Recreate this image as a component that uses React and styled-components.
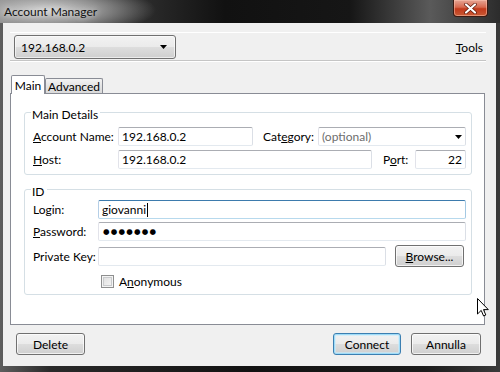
import React from "react";
import styled, { createGlobalStyle } from "styled-components";

const GlobalStyle = createGlobalStyle`
  html, body { margin: 0; padding: 0; background: #1b1b1b; }
  body { font-family: Lato, "Segoe UI", sans-serif; font-size: 12px; color: #000; }
  * { box-sizing: border-box; }
`;

const Window = styled.div`
  position: relative;
  width: 500px;
  height: 372px;
  display: flex;
  flex-direction: column;
  padding: 0 4px 6px 3px;
  background: linear-gradient(90deg, #5e5e5e 0%, #2a2a2a 10%, #121212 50%, #1c1c1c 85%, #3a3a3a 100%);
  overflow: hidden;
`;

const TitleBar = styled.div`
  height: 23px;
  margin: 0 -4px 0 -3px;
  padding: 0 12px 0 4px;
  display: flex;
  align-items: flex-start;
  justify-content: space-between;
  background:
    radial-gradient(ellipse 110px 26px at 46px 10px, rgba(215, 215, 215, 0.95) 0%, rgba(170, 170, 170, 0.75) 50%, rgba(90, 90, 90, 0) 100%),
    linear-gradient(90deg, #7a7a7a 0%, #3a3a3a 20%, #111 45%, #161616 70%, #5a5a5a 86%, #2c2c2c 100%);
`;

const Title = styled.span`
  line-height: 23px;
  font-size: 12px;
  color: #111;
  text-shadow: 0 0 6px rgba(255, 255, 255, 0.9);
`;

const CloseButton = styled.div`
  width: 35px;
  height: 17px;
  display: flex;
  align-items: center;
  justify-content: center;
  border: 1px solid #3b1a12;
  border-top: none;
  border-radius: 0 0 4px 4px;
  background: linear-gradient(#e6a595 0%, #d7694f 45%, #c2391b 55%, #c85a35 100%);
  box-shadow: inset 0 0 0 1px rgba(255, 200, 180, 0.5);
`;

const Client = styled.div`
  flex: 1;
  display: flex;
  flex-direction: column;
  background: #f0f0f0;
`;

const Toolbar = styled.div`
  margin: 9px 10px 0 7px;
  padding: 2px 3px 1px 4px;
  display: flex;
  align-items: center;
  justify-content: space-between;
  border-top: 1px solid #fff;
  border-bottom: 1px solid #c5c5c5;
  box-shadow: 0 1px 0 #fff;
`;

const DropButton = styled.div`
  width: ${(p) => p.width}px;
  height: 24px;
  padding: 0 8px 0 6px;
  display: flex;
  align-items: center;
  justify-content: space-between;
  border: 1px solid #707070;
  border-radius: 3px;
  background: linear-gradient(#f2f2f2 0%, #ebebeb 48%, #dddddd 52%, #cfcfcf 100%);
  box-shadow: inset 0 0 0 1px rgba(255, 255, 255, 0.6);
`;

const MenuText = styled.span`
  font-size: 12px;
`;

const Key = styled.u`
  text-decoration: underline;
  text-underline-offset: 1px;
`;

const TabStrip = styled.div`
  height: 18px;
  margin: 14px 11px 0 7px;
  display: flex;
  align-items: flex-end;
`;

const Tab = styled.div`
  width: ${(p) => p.width}px;
  height: ${(p) => (p.active ? 19 : 15)}px;
  margin-left: ${(p) => p.offset || 0}px;
  margin-bottom: ${(p) => (p.active ? -1 : 0)}px;
  position: relative;
  z-index: ${(p) => (p.active ? 1 : 0)};
  display: flex;
  align-items: center;
  justify-content: center;
  padding-top: ${(p) => (p.active ? 0 : 1)}px;
  border: 1px solid #898c95;
  border-bottom: none;
  border-radius: 2px 2px 0 0;
  background: ${(p) => (p.active ? "#fff" : "linear-gradient(#f3f3f3, #e4e4e4 50%, #dadada 100%)")};
  font-size: 12px;
`;

const Panel = styled.div`
  height: 232px;
  margin: 0 11px 0 7px;
  padding-top: 9px;
  border: 1px solid #898c95;
  background: #fff;
`;

const Group = styled.fieldset`
  margin: ${(p) => p.top || 0}px 12px 0 13px;
  padding: ${(p) => p.padTop}px 5px ${(p) => p.padBottom}px 8px;
  border: 1px solid #d5dfe5;
  border-radius: 3px;
  min-width: 0;
`;

const Legend = styled.legend`
  margin-left: -2px;
  padding: 6px 2px 0 1px;
  line-height: 12px;
  font-size: 12px;
`;

const Row = styled.div`
  display: flex;
  align-items: center;
  height: ${(p) => p.height || 19}px;
  margin-top: ${(p) => p.gap || 0}px;
`;

const Label = styled.span`
  width: ${(p) => p.width}px;
  margin-left: ${(p) => p.gap || 0}px;
  flex: none;
  font-size: 12px;
  white-space: nowrap;
`;

const TextBox = styled.div`
  height: 19px;
  width: ${(p) => (p.width ? `${p.width}px` : "auto")};
  flex: ${(p) => (p.width ? "none" : "1")};
  display: flex;
  align-items: center;
  justify-content: ${(p) => (p.right ? "flex-end" : "space-between")};
  padding: 0 3px;
  border: 1px solid;
  border-color: ${(p) =>
    p.focused ? "#3d7bad #a4c9e3 #b7d9ed #b5cfe7" : "#abadb3 #dbdfe6 #e3e9ef #e2e3ea"};
  border-radius: 2px;
  background: #fff;
  font-size: 12px;
  color: ${(p) => (p.muted ? "#6d6d6d" : "#000")};
  white-space: nowrap;
`;

const Caret = styled.span`
  display: inline-block;
  width: 1px;
  height: 14px;
  margin-left: 1px;
  background: #000;
  vertical-align: middle;
`;

const Dots = styled.span`
  font-family: "DejaVu Sans", sans-serif;
  font-size: 7.5px;
  letter-spacing: 1.2px;
  padding-left: 1px;
`;

const Button = styled.div`
  width: ${(p) => p.width}px;
  height: 22px;
  margin-left: ${(p) => p.gap || 0}px;
  margin-right: ${(p) => p.after || 0}px;
  flex: none;
  display: flex;
  align-items: center;
  justify-content: center;
  border: 1px solid ${(p) => (p.primary ? "#3c7fb1" : "#707070")};
  border-radius: 3px;
  background: linear-gradient(#f2f2f2 0%, #ebebeb 48%, #dddddd 52%, #cfcfcf 100%);
  box-shadow: ${(p) =>
    p.primary
      ? "inset 0 0 0 1px #9fdcf8, inset 0 0 0 2px rgba(200, 235, 252, 0.6)"
      : "inset 0 0 0 1px rgba(255, 255, 255, 0.7)"};
  font-size: 12px;
`;

const CheckRow = styled.div`
  display: flex;
  align-items: center;
  height: 20px;
  margin: 4px 0 0 68px;
`;

const CheckBox = styled.span`
  width: 13px;
  height: 13px;
  margin-right: 5px;
  border: 1px solid #8e8f8f;
  background: linear-gradient(135deg, #dcdcdc 0%, #f7f7f7 100%);
  box-shadow: inset 0 0 0 1px #f4f4f4, inset 0 0 0 2px #c9cbcd;
`;

const Footer = styled.div`
  display: flex;
  align-items: center;
  padding: 8px 15px 10px 13px;
`;

const Spacer = styled.div`
  flex: 1;
`;

const Pointer = styled.svg`
  position: absolute;
  left: 477px;
  top: 298px;
`;

const Arrow = () => (
  <svg width="7" height="4" viewBox="0 0 7 4">
    <path d="M0 0 H7 L3.5 4 Z" fill="#000" />
  </svg>
);

export default function App() {
  return (
    <>
      <GlobalStyle />
      <Window>
        <TitleBar>
          <Title>Account Manager</Title>
          <CloseButton>
            <svg width="13" height="11" viewBox="0 0 13 11">
              <path d="M2 1.5 L11 9.5 M11 1.5 L2 9.5" stroke="#5a1608" strokeWidth="3.6" strokeLinecap="round" />
              <path d="M2 1.5 L11 9.5 M11 1.5 L2 9.5" stroke="#fff" strokeWidth="2.2" strokeLinecap="round" />
            </svg>
          </CloseButton>
        </TitleBar>
        <Client>
          <Toolbar>
            <DropButton width={162}>
              <MenuText>192.168.0.2</MenuText>
              <Arrow />
            </DropButton>
            <MenuText>
              <Key>T</Key>ools
            </MenuText>
          </Toolbar>

          <TabStrip>
            <Tab active width={34} offset={1}>Main</Tab>
            <Tab width={58}>Advanced</Tab>
          </TabStrip>

          <Panel>
            <Group padTop={6} padBottom={5}>
              <Legend>Main Details</Legend>
              <Row>
                <Label width={85}>
                  <Key>A</Key>ccount Name:
                </Label>
                <TextBox width={135}>192.168.0.2</TextBox>
                <Label width={55} gap={10}>
                  Cat<Key>e</Key>gory:
                </Label>
                <TextBox muted>
                  (optional)
                  <Arrow />
                </TextBox>
              </Row>
              <Row gap={4}>
                <Label width={85}>
                  <Key>H</Key>ost:
                </Label>
                <TextBox>192.168.0.2</TextBox>
                <Label width={32} gap={11}>
                  P<Key>o</Key>rt:
                </Label>
                <TextBox width={51} right>22</TextBox>
              </Row>
            </Group>

            <Group top={5} padTop={2} padBottom={3}>
              <Legend>ID</Legend>
              <Row>
                <Label width={65}>Login:</Label>
                <TextBox focused>
                  <span>
                    giovanni
                    <Caret />
                  </span>
                </TextBox>
              </Row>
              <Row gap={3}>
                <Label width={65}>
                  <Key>P</Key>assword:
                </Label>
                <TextBox>
                  <Dots>●●●●●●●</Dots>
                </TextBox>
              </Row>
              <Row gap={4} height={22}>
                <Label width={65}>Private Key:</Label>
                <TextBox />
                <Button width={69} gap={9} after={2}>
                  <span>
                    <Key>B</Key>rowse...
                  </span>
                </Button>
              </Row>
              <CheckRow>
                <CheckBox />
                <span>
                  A<Key>n</Key>onymous
                </span>
              </CheckRow>
            </Group>
          </Panel>

          <Footer>
            <Button width={69}>Delete</Button>
            <Spacer />
            <Button width={68} primary>Connect</Button>
            <Button width={70} gap={10}>Annulla</Button>
          </Footer>
        </Client>

        <Pointer width="12" height="19" viewBox="0 0 12 19">
          <path d="M0.5 0.5 V16 L4.2 12.4 L6.6 18 L8.8 17 L6.5 11.6 L11.3 11.6 Z" fill="#fff" stroke="#000" strokeWidth="1" />
        </Pointer>
      </Window>
    </>
  );
}
